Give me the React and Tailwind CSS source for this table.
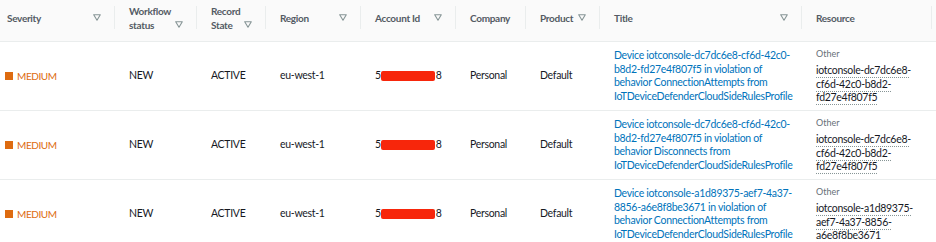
import React from "react"

const cols = [
  { key: "severity", label: ["Severity"], w: 115, filter: true, first: true },
  { key: "workflow", label: ["Workflow", "status"], w: 82, filter: true },
  { key: "record", label: ["Record", "State"], w: 69, filter: true },
  { key: "region", label: ["Region"], w: 95, filter: true },
  { key: "account", label: ["Account Id"], w: 95, filter: true },
  { key: "company", label: ["Company"], w: 70 },
  { key: "product", label: ["Product"], w: 74, filter: true },
  { key: "title", label: ["Title"], w: 202, filter: true },
  { key: "resource", label: ["Resource"], w: 130 },
]

const rows = [
  {
    title: [
      "Device iotconsole-dc7dc6e8-cf6d-42c0-",
      "b8d2-fd27e4f807f5 in violation of",
      "behavior ConnectionAttempts from",
      "IoTDeviceDefenderCloudSideRulesProfile",
    ],
    resource: ["iotconsole-dc7dc6e8-", "cf6d-42c0-b8d2-", "fd27e4f807f5"],
  },
  {
    title: [
      "Device iotconsole-dc7dc6e8-cf6d-42c0-",
      "b8d2-fd27e4f807f5 in violation of",
      "behavior Disconnects from",
      "IoTDeviceDefenderCloudSideRulesProfile",
    ],
    resource: ["iotconsole-dc7dc6e8-", "cf6d-42c0-b8d2-", "fd27e4f807f5"],
  },
  {
    title: [
      "Device iotconsole-a1d89375-aef7-4a37-",
      "8856-a6e8f8be3671 in violation of",
      "behavior ConnectionAttempts from",
      "IoTDeviceDefenderCloudSideRulesProfile",
    ],
    resource: ["iotconsole-a1d89375-", "aef7-4a37-8856-", "a6e8f8be3671"],
  },
]

function FilterIcon() {
  return (
    <svg width="8" height="7" viewBox="0 0 8 7" className="shrink-0">
      <polygon points="0.7,0.7 7.3,0.7 4,6.2" fill="none" stroke="#879596" strokeWidth="1.1" strokeLinejoin="round" />
    </svg>
  )
}

function HeaderCell({ col }) {
  return (
    <th className={`p-0 pt-[6px] pb-[12px] align-top font-bold text-left ${col.first ? "pl-[7px]" : "pl-[14px]"}`}>
      <div className="flex items-center justify-between gap-[3px] h-[23px] border-r border-[#eaeded] pr-[13px]">
        <div className="leading-[14px]">
          {col.label.map(l => (
            <div key={l} className="whitespace-nowrap">{l}</div>
          ))}
        </div>
        {col.filter && (
          <div className={col.label.length > 1 ? "pt-[14px]" : ""}>
            <FilterIcon />
          </div>
        )}
      </div>
    </th>
  )
}

export default function App() {
  return (
    <div className="w-[936px] h-[242px] overflow-hidden bg-white" style={{ fontFamily: "Lato, 'Liberation Sans', sans-serif" }}>
      <table className="table-fixed border-collapse w-[936px]">
        <colgroup>
          {cols.map(c => (
            <col key={c.key} style={{ width: c.w }} />
          ))}
          <col />
        </colgroup>
        <thead>
          <tr className="bg-[#fafafa] text-[#545b64] text-[10px] tracking-[-0.3px] border-b border-[#eaeded] h-[41px]">
            {cols.map(c => (
              <HeaderCell key={c.key} col={c} />
            ))}
            <th className="p-0"></th>
          </tr>
        </thead>
        <tbody className="text-[#16191f] text-[10.5px] tracking-[-0.3px]">
          {rows.map((r, i) => (
            <tr key={i} className="border-b border-[#eaeded]">
              <td className="pl-[5px] py-[7px] align-middle">
                <span className="flex items-center gap-[4px] text-[#dd6b10] text-[10px] tracking-[-0.4px]">
                  <span className="inline-block w-[8px] h-[8px] bg-[#dd6b10]"></span>
                  MEDIUM
                </span>
              </td>
              <td className="pl-[14px] align-middle">NEW</td>
              <td className="pl-[14px] align-middle">ACTIVE</td>
              <td className="pl-[14px] align-middle">eu-west-1</td>
              <td className="pl-[14px] align-middle">
                <span className="flex items-center">
                  5
                  <span className="inline-block w-[54px] h-[10px] bg-[#f7260b] rounded-[2px] mr-[1px]"></span>
                  8
                </span>
              </td>
              <td className="pl-[14px] align-middle">Personal</td>
              <td className="pl-[14px] align-middle">Default</td>
              <td className="pl-[14px] py-[7px] align-middle text-[#0073bb] leading-[13.5px]">
                {r.title.map(l => (
                  <div key={l} className="whitespace-nowrap">{l}</div>
                ))}
              </td>
              <td className="pl-[14px] align-middle">
                <div className="text-[9px] text-[#687078] leading-[14px] mb-[3px] tracking-normal">Other</div>
                <div className="leading-[13.5px]">
                  {r.resource.map(l => (
                    <div key={l} className="whitespace-nowrap">
                      <span className="underline decoration-dotted decoration-[#879596] underline-offset-[3px]">{l}</span>
                    </div>
                  ))}
                </div>
              </td>
              <td></td>
            </tr>
          ))}
        </tbody>
      </table>
    </div>
  )
}
